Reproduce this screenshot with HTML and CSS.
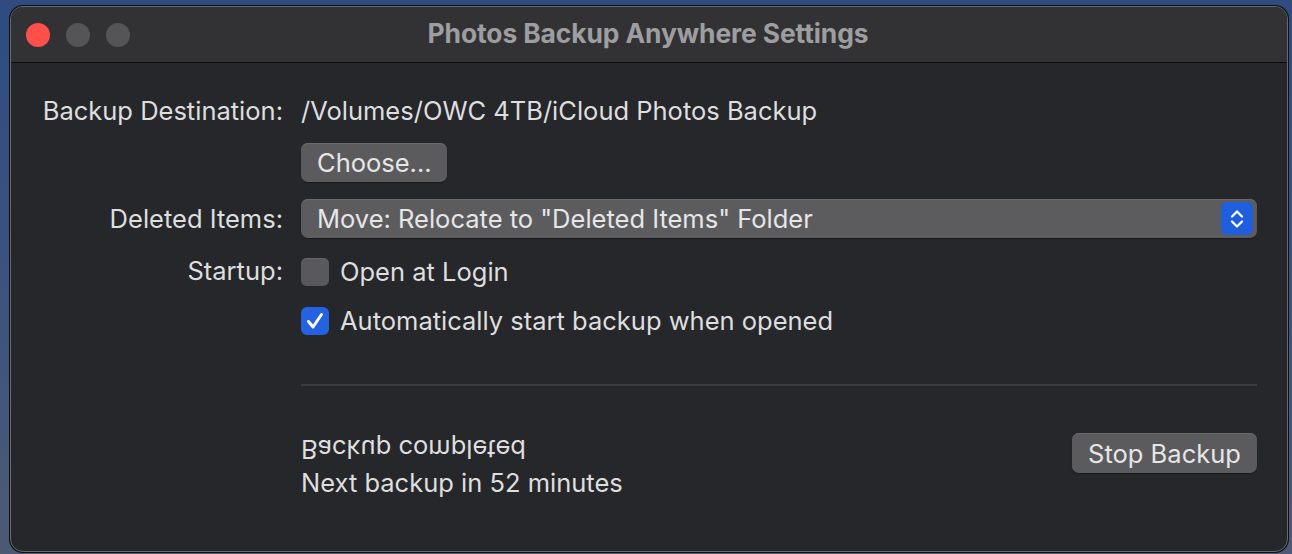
FILE: index.html
```html
<!DOCTYPE html>
<html lang="en">
  <head>
    <meta charset="UTF-8" />
    <meta name="viewport" content="width=device-width, initial-scale=1.0" />
    <title>Photos Backup Anywhere Settings</title>
    <link rel="stylesheet" href="styles.css">
  </head>
  <body>
    <div class="window">
      <div class="titlebar">
        <div class="lights">
          <span class="light close"></span>
          <span class="light"></span>
          <span class="light"></span>
        </div>
        <h1>Photos Backup Anywhere Settings</h1>
      </div>
      <div class="content">
        <div class="form">
          <label class="row-label">Backup Destination:</label>
          <div class="row-value text">/Volumes/OWC 4TB/iCloud Photos Backup</div>

          <div></div>
          <div class="row-value">
            <button type="button" class="btn choose">Choose...</button>
          </div>

          <label class="row-label">Deleted Items:</label>
          <div class="row-value">
            <div class="popup">
              <span>Move: Relocate to "Deleted Items" Folder</span>
              <span class="stepper">
                <svg width="32" height="33" viewBox="0 0 32 33">
                  <path d="M11 14.5 L16 9.5 L21 14.5" fill="none" stroke="#fff" stroke-width="2.2" stroke-linecap="round" stroke-linejoin="round" />
                  <path d="M11 19.5 L16 24.5 L21 19.5" fill="none" stroke="#fff" stroke-width="2.2" stroke-linecap="round" stroke-linejoin="round" />
                </svg>
              </span>
            </div>
          </div>

          <label class="row-label">Startup:</label>
          <div class="row-value check-row">
            <span class="box"></span>
            <span>Open at Login</span>
          </div>

          <div></div>
          <div class="row-value check-row">
            <span class="box checked">
              <svg width="28" height="28" viewBox="0 0 28 28">
                <path d="M7.5 14.5 L12 20 L20.5 7.5" fill="none" stroke="#fff" stroke-width="3" stroke-linecap="round" stroke-linejoin="round" />
              </svg>
            </span>
            <span>Automatically start backup when opened</span>
          </div>
        </div>

        <div class="separator"></div>

        <div class="status">
          <div class="status-text">
            <div class="flipped">Backup completed</div>
            <div>Next backup in 52 minutes</div>
          </div>
          <button type="button" class="btn stop">Stop Backup</button>
        </div>
      </div>
    </div>
  </body>
</html>
```

FILE: styles.css
```css
body {
  margin: 0;
  height: 554px;
  overflow: hidden;
  background: linear-gradient(180deg, #2f4b7f 0%, #3a5281 45%, #4c5a74 100%);
  font-family: Inter, "Noto Sans", sans-serif;
  color: #dedede;
}
.window {
  margin: 6px 4px 0 10px;
  height: 544px;
  border: 1px solid #6a6a6d;
  border-radius: 13px;
  background: #26272b;
  overflow: hidden;
  box-shadow: 0 0 0 1px #101012;
}
.titlebar {
  height: 55px;
  background: #323235;
  border-bottom: 1px solid #0d0d0f;
  display: flex;
  align-items: center;
  position: relative;
}
.lights {
  display: flex;
  gap: 16px;
  padding-left: 15px;
  padding-top: 1px;
}
.light {
  width: 24px;
  height: 24px;
  border-radius: 50%;
  background: #555557;
}
.light.close {
  background: #fe4f4b;
}
h1 {
  position: absolute;
  left: 0;
  right: 0;
  top: 10px;
  margin: 0;
  text-align: center;
  font-size: 26.4px;
  line-height: 32px;
  font-weight: 700;
  color: #9e9ea0;
  letter-spacing: -0.1px;
  padding-right: 2px;
}
.content {
  padding: 33px 30px 0 0;
}
.form {
  display: grid;
  grid-template-columns: 272px 1fr;
  column-gap: 18px;
  row-gap: 17px;
  align-items: center;
}
.row-label {
  text-align: right;
  font-size: 25.5px;
  line-height: 30px;
}
.row-value {
  font-size: 25.5px;
  line-height: 30px;
}
.btn {
  font-family: inherit;
  font-size: 25.5px;
  color: #e6e6e6;
  background: #5b5b5e;
  border: none;
  border-radius: 7px;
  box-shadow: inset 0 1px 0 #6a6a6d, 0 1px 1px #1a1a1c;
  height: 39px;
  padding: 0 16px;
}
.choose {
  width: 146px;
}
.popup {
  height: 39px;
  background: #5c5c5f;
  border-radius: 7px;
  box-shadow: inset 0 1px 0 #6a6a6d, 0 1px 1px #1a1a1c;
  display: flex;
  align-items: center;
  justify-content: space-between;
  padding: 0 4px 0 16px;
  color: #e6e6e6;
}
.stepper {
  width: 32px;
  height: 33px;
  background: #1f5fde;
  border-radius: 6px;
  display: flex;
}
.check-row {
  display: flex;
  align-items: center;
  gap: 11px;
  margin-top: 2px;
}
.box {
  width: 28px;
  height: 28px;
  border-radius: 6px;
  background: #59595c;
  box-shadow: inset 0 1px 0 #676769;
  display: flex;
}
.box.checked {
  background: #2462df;
  box-shadow: none;
}
.separator {
  margin: 48px 0 0 290px;
  height: 2px;
  background: #3b3c40;
}
.status {
  display: flex;
  justify-content: space-between;
  align-items: flex-start;
  padding: 47px 0 0 290px;
}
.status-text {
  font-size: 25.5px;
  line-height: 33px;
}
.flipped {
  transform: scaleY(-1);
}
.stop {
  width: 185px;
  height: 40px;
  margin-top: 0;
}
```
